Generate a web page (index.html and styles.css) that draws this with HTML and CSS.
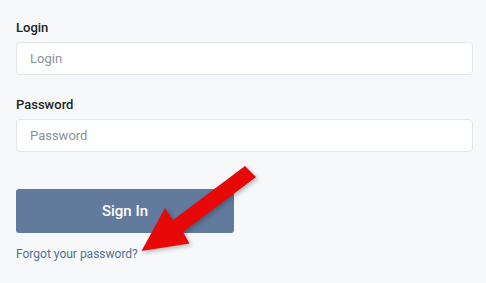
FILE: index.html
```html
<!DOCTYPE html>
<html lang="en">
<head>
<meta charset="utf-8">
<title>Login</title>
<link rel="stylesheet" href="styles.css">
</head>
<body>
<form class="login-form">
  <div class="field">
    <label class="field-label" for="login">Login</label>
    <input class="field-input" id="login" type="text" placeholder="Login">
  </div>
  <div class="field">
    <label class="field-label" for="password">Password</label>
    <input class="field-input" id="password" type="password" placeholder="Password">
  </div>
  <button class="signin-btn" type="button">Sign In</button>
  <a class="forgot-link" href="#">Forgot your password?</a>
</form>
<svg class="annotation-arrow" width="486" height="283" viewBox="0 0 486 283">
  <polygon points="245,166 256,177 183,232 189.5,243.5 141.5,251 165,208 173,220" fill="#e70808"/>
</svg>
</body>
</html>
```
FILE: styles.css
```css
* { box-sizing: border-box; }
html, body {
  margin: 0;
  padding: 0;
  background: #f7f8fa;
  font-family: Roboto, "Liberation Sans", Arial, sans-serif;
  color: #212529;
}
body {
  width: 486px;
  height: 283px;
  overflow: hidden;
  position: relative;
}
.login-form {
  display: flex;
  flex-direction: column;
  align-items: flex-start;
  padding: 18px 13px 0 16px;
}
.field {
  display: flex;
  flex-direction: column;
  width: 100%;
  margin-bottom: 20.5px;
}
.field-label {
  font-size: 13px;
  font-weight: 500;
  line-height: 19.5px;
  margin-bottom: 4.5px;
  color: #1f2329;
}
.field-input {
  width: 100%;
  height: 32.5px;
  border: 1px solid #e2e5e9;
  border-radius: 4px;
  background: #ffffff;
  padding: 0 13px;
  font-family: inherit;
  font-size: 13px;
  color: #212529;
  outline: none;
}
.field-input::placeholder { color: #8792a0; }
.signin-btn {
  margin-top: 16.5px;
  width: 218px;
  height: 44.5px;
  border: none;
  border-radius: 3px;
  background: #627a9c;
  color: #ffffff;
  font-family: inherit;
  font-size: 15px;
  font-weight: 500;
  cursor: pointer;
}
.forgot-link {
  margin-top: 12px;
  font-size: 12px;
  line-height: 19px;
  color: #52708f;
  text-decoration: none;
}
.annotation-arrow {
  position: absolute;
  left: 0;
  top: 0;
  pointer-events: none;
  filter: drop-shadow(2px 2px 2px rgba(0,0,0,0.25));
}
```
